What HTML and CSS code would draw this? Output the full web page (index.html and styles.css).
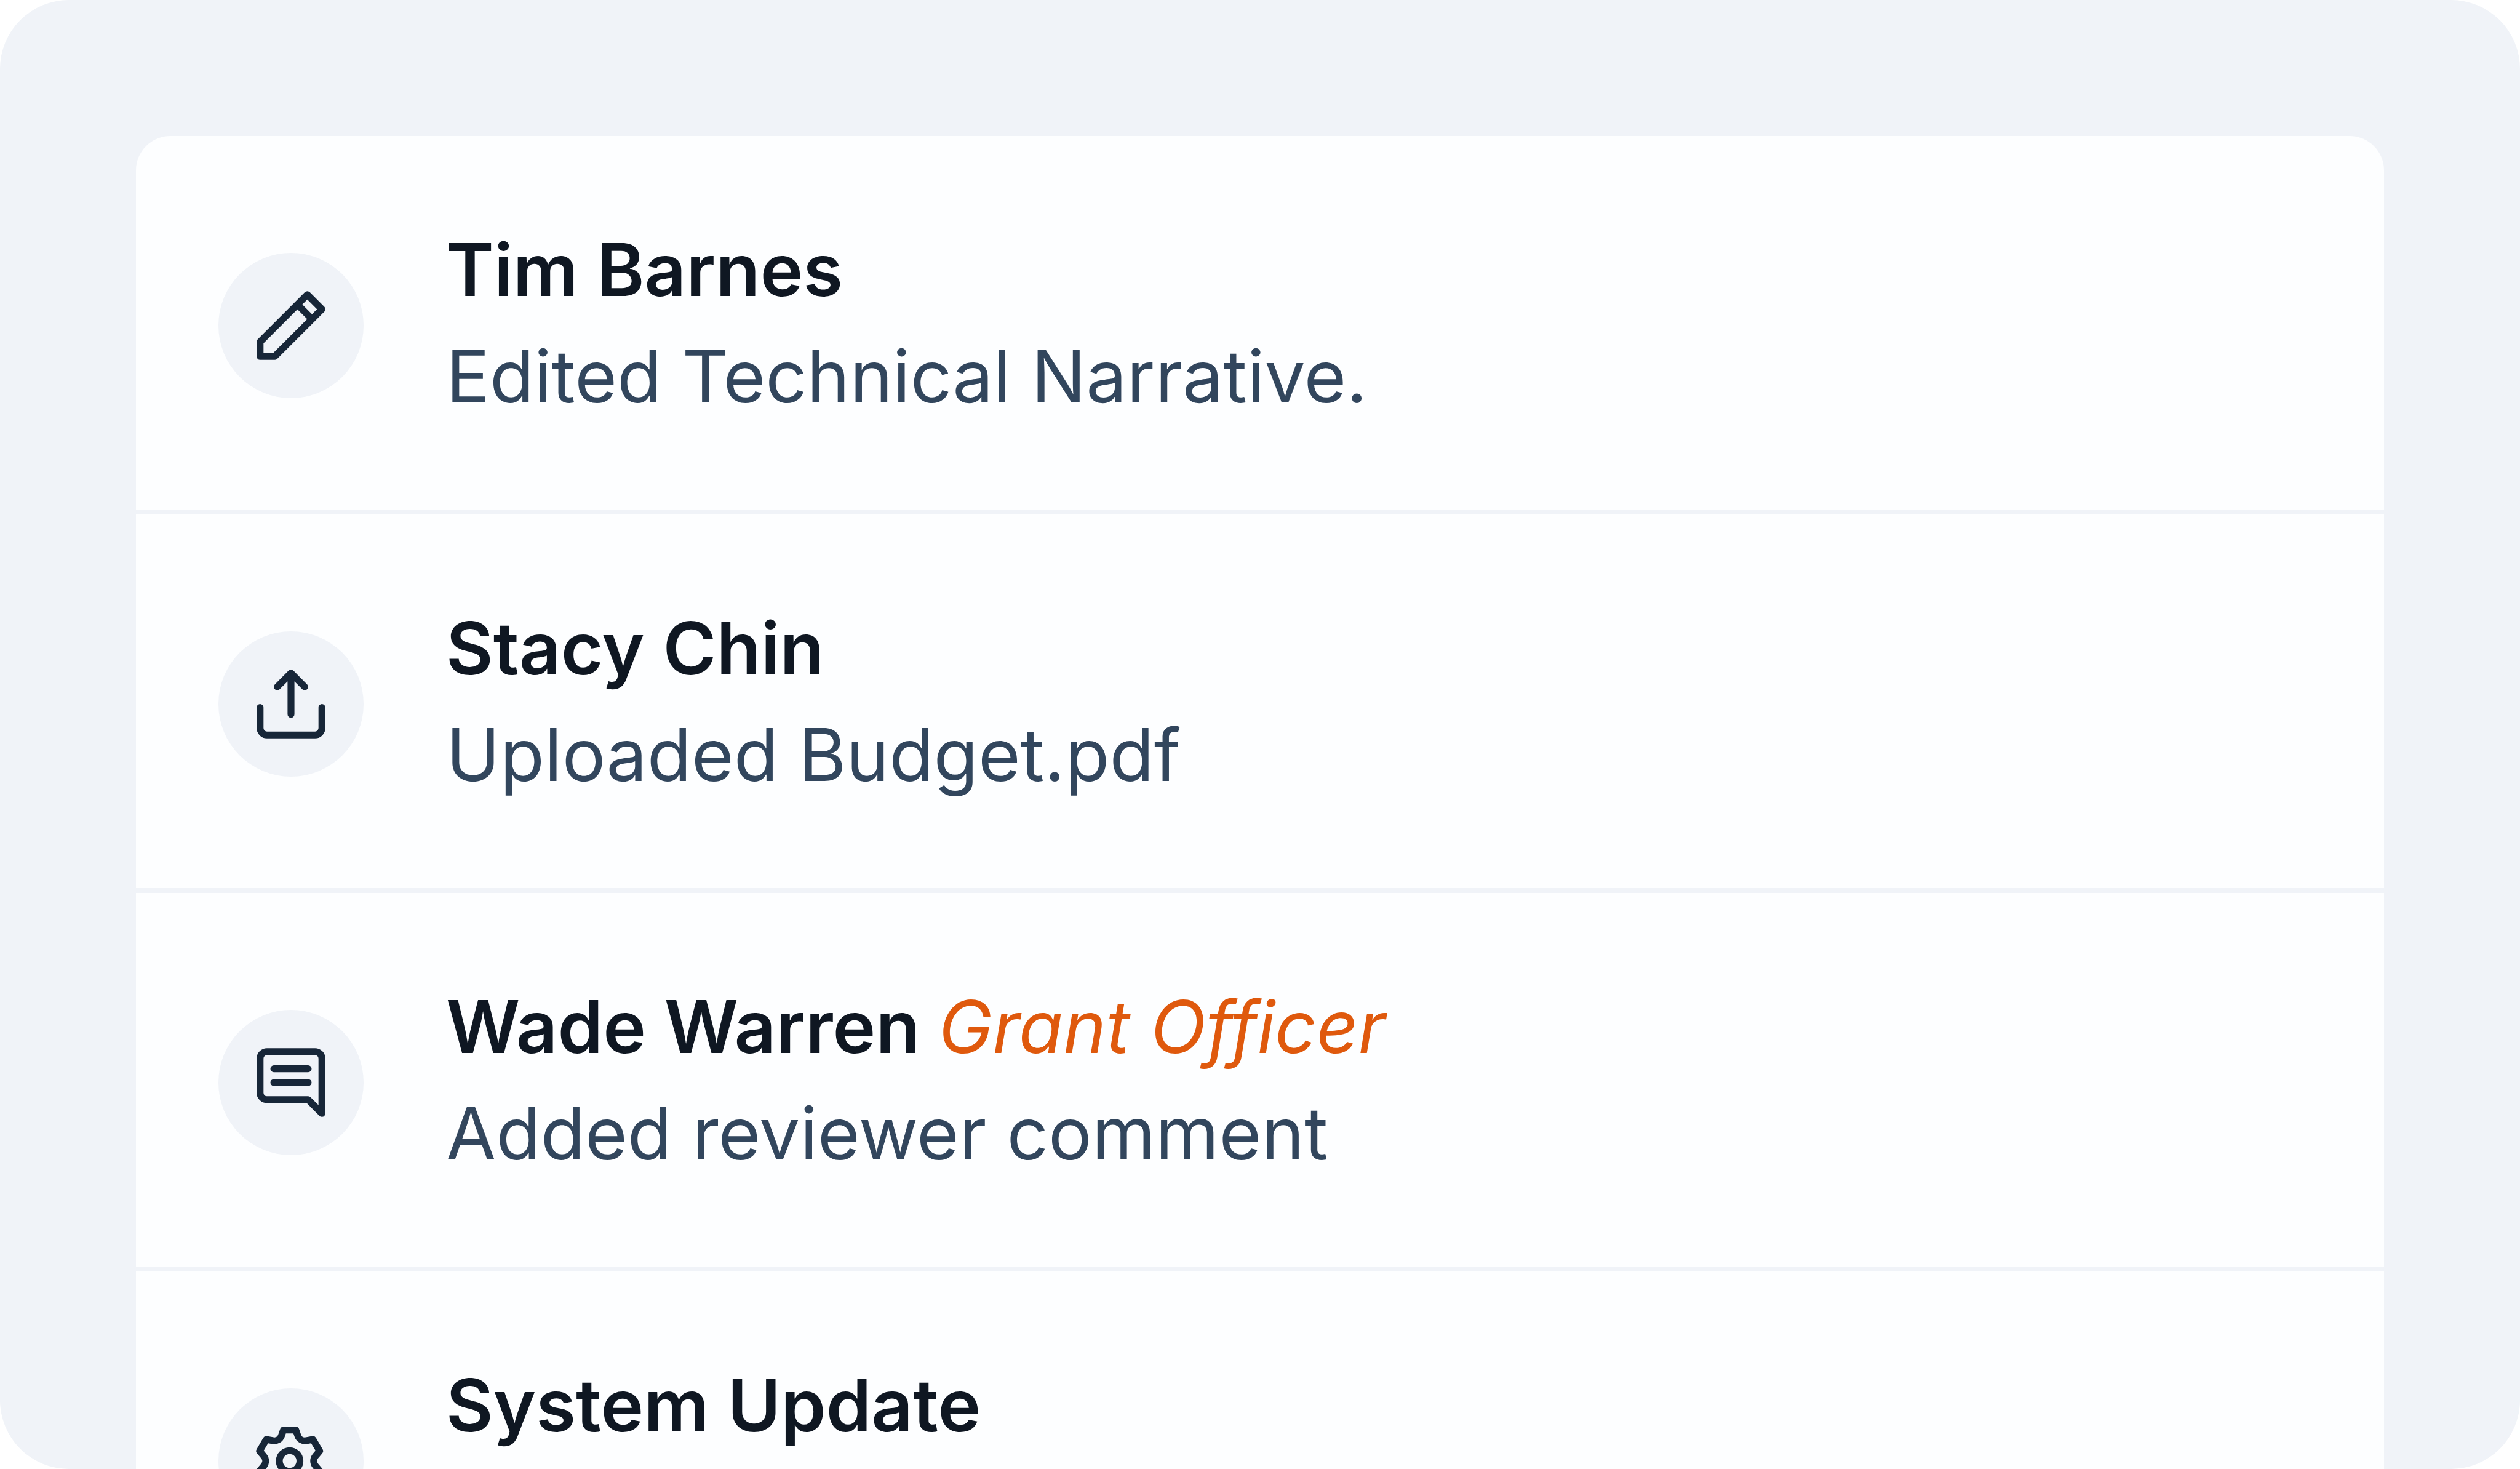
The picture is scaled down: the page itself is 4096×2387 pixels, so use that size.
FILE: index.html
```html
<!DOCTYPE html>
<html lang="en">
<head>
  <meta charset="UTF-8" />
  <meta name="viewport" content="width=device-width, initial-scale=1" />
  <title>Activity</title>
  <link rel="stylesheet" href="styles.css">
</head>
<body>
  <main class="panel">
    <ul class="feed">
      <li class="item">
        <span class="badge">
          <!-- pencil -->
          <svg class="icon" viewBox="0 0 24 24" aria-hidden="true">
            <path d="M3 21v-4.25L16.75 3 21 7.25 7.25 21z" />
            <path d="M14 6l4 4" />
          </svg>
        </span>
        <div class="text">
          <h2 class="name">Tim Barnes</h2>
          <p class="action">Edited Technical Narrative.</p>
        </div>
      </li>

      <li class="item">
        <span class="badge">
          <!-- upload -->
          <svg class="icon" viewBox="0 0 24 24" aria-hidden="true">
            <path d="M12 15V3M8 7l4-4 4 4" />
            <path d="M3 13v6a2 2 0 0 0 2 2h14a2 2 0 0 0 2-2v-6" />
          </svg>
        </span>
        <div class="text">
          <h2 class="name">Stacy Chin</h2>
          <p class="action">Uploaded Budget.pdf</p>
        </div>
      </li>

      <li class="item">
        <span class="badge">
          <!-- comment -->
          <svg class="icon" viewBox="0 0 24 24" aria-hidden="true">
            <path d="M21 21V5a2 2 0 0 0-2-2H5a2 2 0 0 0-2 2v10a2 2 0 0 0 2 2h12z" />
            <path d="M7 8h10M7 12h10" />
          </svg>
        </span>
        <div class="text">
          <h2 class="name">Wade Warren <em class="role">Grant Officer</em></h2>
          <p class="action">Added reviewer comment</p>
        </div>
      </li>

      <li class="item">
        <span class="badge">
          <!-- gear -->
          <svg class="icon" viewBox="0 0 24 24" aria-hidden="true">
            <path d="M9.8 3H13.4L14 4.7A2.2 2.2 0 0 0 16.4 6.1L18.4 5.75 20.35 9.1 19.1 10.6A2.2 2.2 0 0 0 19.1 13.4L20.35 14.9 18.4 18.25 16.4 17.9A2.2 2.2 0 0 0 14 19.3L13.4 21H9.8L9.2 19.3A2.2 2.2 0 0 0 6.8 17.9L4.8 18.25 2.85 14.9 4.1 13.4A2.2 2.2 0 0 0 4.1 10.6L2.85 9.1 4.8 5.75 6.8 6.1A2.2 2.2 0 0 0 9.2 4.7z" />
            <circle cx="11.6" cy="12" r="3" />
          </svg>
        </span>
        <div class="text">
          <h2 class="name">System Update</h2>
        </div>
      </li>
    </ul>
  </main>
</body>
</html>
```

FILE: styles.css
```css
* { box-sizing: border-box; }

body {
  margin: 0;
  background-color: #fff;
  font-family: Inter, "Liberation Sans", sans-serif;
  font-size: 118px;
  line-height: 173px;
}

/* the feed runs past the bottom of the panel and is clipped there */
.panel {
  height: 100vh;
  padding: 221px 221px 0;
  overflow: hidden;
  background-color: #f0f3f8;
  border-radius: 112px;
}

.feed {
  margin: 0;
  padding: 0;
  list-style: none;
  background-color: #fdfeff;
  border-radius: 56px;
}

.item {
  display: flex;
  align-items: flex-start;
  gap: 134px;
  min-height: 615px;
  padding: 131px 134px 130px;
  border-bottom: 8px solid #f0f3f8;
}

.badge {
  display: flex;
  flex: none;
  align-items: center;
  justify-content: center;
  width: 236px;
  height: 236px;
  margin-top: 59px;
  background-color: #f0f3f8;
  border-radius: 50%;
}

.icon {
  width: 134px;
  height: 134px;
  fill: none;
  stroke: #172638;
  stroke-width: 2;
  stroke-linecap: round;
  stroke-linejoin: round;
}

.name, .action {
  margin: 0;
  font-size: inherit;
}

.name   { font-weight: 600; color: #0f1722; }
.action { color: #32465d; }
.role   { font-weight: 400; color: #df590d; }
```
